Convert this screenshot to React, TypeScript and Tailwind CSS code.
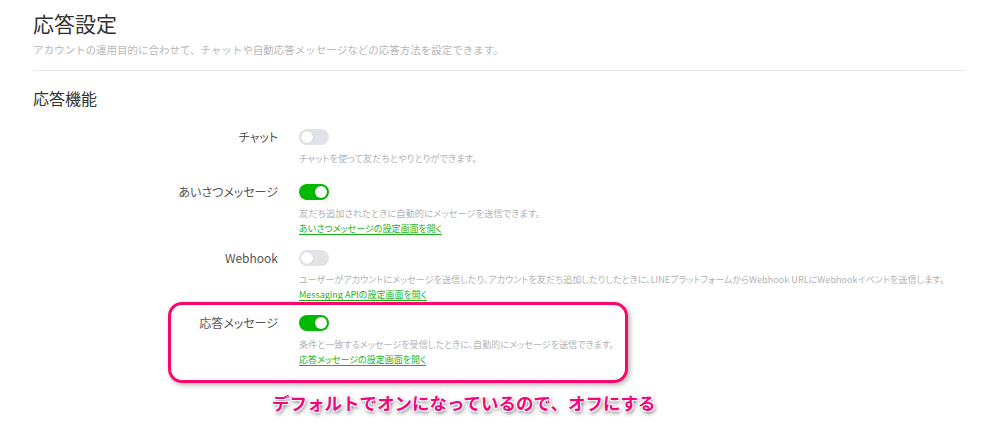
import React from 'react';

const Toggle = ({ on }: { on: boolean }) => (
  <div
    className={`relative h-4 w-[30px] rounded-full ${on ? 'bg-[#00b900]' : 'bg-[#e1e3e7]'}`}
  >
    <div
      className={`absolute top-[2px] h-3 w-3 rounded-full bg-white shadow-[0_0_1px_rgba(0,0,0,0.25)] ${
        on ? 'right-[2px]' : 'left-[2px]'
      }`}
    />
  </div>
);

type RowProps = {
  label: string;
  on: boolean;
  desc: string;
  descSize?: string;
  link?: string;
  className?: string;
};

const Row = ({ label, on, desc, descSize, link, className }: RowProps) => (
  <div className={`flex gap-[21px] ${className ?? ''}`}>
    <div className="w-[245px] shrink-0 text-right text-[12px] leading-4 text-[#555] [font-feature-settings:'palt']">
      {label}
    </div>
    <div>
      <Toggle on={on} />
      <p
        className={`mt-[5px] whitespace-nowrap leading-4 text-[#b3b3b3] [font-feature-settings:'palt'] ${
          descSize ?? 'text-[9.3px]'
        }`}
      >
        {desc}
      </p>
      {link && (
        <a className="block text-[9px] leading-4 text-[#19b419] underline underline-offset-2 [font-feature-settings:'palt']">
          {link}
        </a>
      )}
    </div>
  </div>
);

export default function App() {
  return (
    <div className="h-[441px] w-full overflow-hidden bg-white pl-[33px] pr-[17px] pt-[10px] font-['Noto_Sans_CJK_JP',sans-serif]">
      <h1 className="text-[21px] leading-[26px] text-[#333]">応答設定</h1>
      <p className="mt-[6px] text-[10.5px] leading-4 text-[#b8b8b8]">
        アカウントの運用目的に合わせて、チャットや自動応答メッセージなどの応答方法を設定できます。
      </p>
      <div className="mt-[12px] border-t border-[#e8e8e8]" />
      <h2 className="mt-[16px] text-[16px] leading-[22px] text-[#333]">応答機能</h2>

      <div className="mt-[20px]">
        <Row label="チャット" on={false} desc="チャットを使って友だちとやりとりができます。" className="mb-[18px]" />
        <Row
          label="あいさつメッセージ"
          on
          desc="友だち追加されたときに自動的にメッセージを送信できます。"
          link="あいさつメッセージの設定画面を開く"
          className="mb-[13px]"
        />
        <Row
          label="Webhook"
          on={false}
          desc="ユーザーがアカウントにメッセージを送信したり、アカウントを友だち追加したりしたときに、LINEプラットフォームからWebhook URLにWebhookイベントを送信します。"
          descSize="text-[9.1px]"
          link="Messaging APIの設定画面を開く"
          className="mb-[12px]"
        />
        <div className="relative">
          <Row
            label="応答メッセージ"
            on
            desc="条件と一致するメッセージを受信したときに、自動的にメッセージを送信できます。"
            descSize="text-[9.1px]"
            link="応答メッセージの設定画面を開く"
          />
          {/* highlight frame */}
          <div className="pointer-events-none absolute left-[135px] top-[-13px] h-[81px] w-[460px] rounded-[14px] border-[3px] border-[#f7076b] shadow-[2px_2px_5px_rgba(0,0,0,0.3)]" />
        </div>
      </div>

      <p className="ml-[239px] mt-[23px] text-[17.5px] font-bold leading-6 text-[#f0077a] [text-shadow:-1px_-1px_0_#fff,1px_-1px_0_#fff,-1px_1px_0_#fff,1px_1px_0_#fff,1px_2px_4px_rgba(0,0,0,0.75)]">
        デフォルトでオンになっているので、オフにする
      </p>
    </div>
  );
}
